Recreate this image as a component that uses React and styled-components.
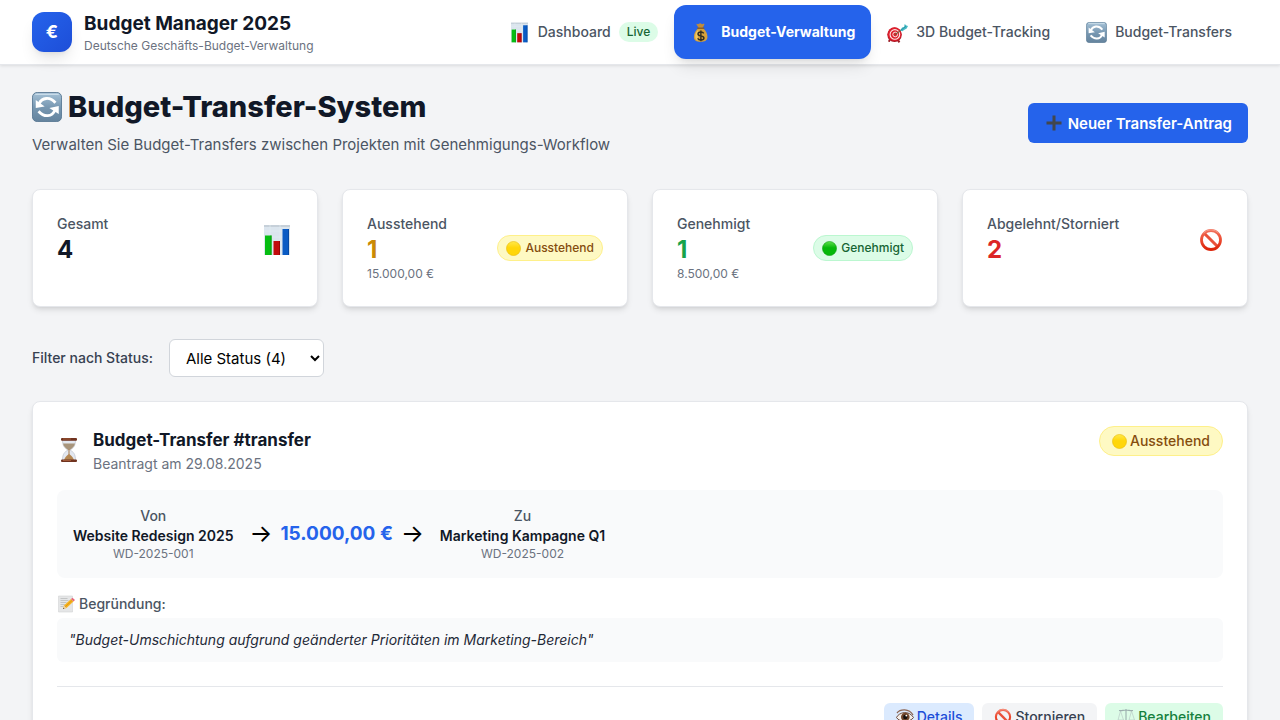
import React from "react";
import styled, { createGlobalStyle, css } from "styled-components";

const GlobalStyle = createGlobalStyle`
  *, *::before, *::after { box-sizing: border-box; }
  body {
    margin: 0;
    background: #f3f4f6;
    color: #111827;
    font-family: Inter, "Liberation Sans", sans-serif;
    font-size: 15px;
    line-height: 24px;
  }
  h1, h2, h3, p { margin: 0; }
  button, select { font-family: inherit; }
`;

/* ---------- icons ---------- */

const Icon = styled.svg`
  display: block;
  flex: none;
  width: ${(p) => p.$size}px;
  height: ${(p) => p.$size}px;
`;

const ChartIcon = ({ size }) => (
  <Icon $size={size} viewBox="0 0 32 32" aria-hidden="true">
    <path d="M3 1h26v30H3z" fill="#dbe5ee" />
    <path d="M3 1h26v2H3z" fill="#c6d0d9" />
    <path d="M3 7h26M3 13h26M3 19h26M3 25h26M9 1v30M19 1v30" stroke="#e4ecf2" strokeWidth="0.600" />
    <path d="M4 11.500h6.500V31H4z" fill="#06bd12" />
    <path d="M12.500 17H19v14h-6.500z" fill="#c20a0c" />
    <path d="M21.500 5H28v26h-6.500z" fill="#0a5bc4" />
    <path d="M9.500 11.500h1V31h-1z" fill="#079b10" />
    <path d="M18 17h1v14h-1z" fill="#990406" />
    <path d="M27 5h1v26h-1z" fill="#0649a4" />
  </Icon>
);

const MoneyBagIcon = ({ size }) => (
  <Icon $size={size} viewBox="0 0 32 32" aria-hidden="true">
    <path d="M11 3c2 1 2.500-1 4.500-1s2 2 4 1c2-1 3 0 2 2l-3 5h-4.500l-3.500-5c-1-2-.5-3 .5-2z" fill="#c08c3a" />
    <path d="M13 9.500h6.500c5 3 7 8.500 7 13.500s-4 7.500-10.500 7.500S6 28 6 23s2-10.500 7-13.500z" fill="#d6a23d" />
    <path d="M8 22c0-5 2-9 5-10-1 5-2 11 0 16-4 0-5-2.500-5-6z" fill="#efc966" />
    <path d="M12 9.500h9" stroke="#8b5f24" strokeWidth="2.200" strokeLinecap="round" />
    <path d="M21 17.200c-1-1.600-2.500-2-4.500-2-3 0-4.300 1.300-4.300 3 0 4.300 9 2 9 6.200 0 2-2 3-4.600 3-2.200 0-4-.7-5-2.300M16.600 13v16.500" fill="none" stroke="#332f22" strokeWidth="2.200" />
  </Icon>
);

const TargetIcon = ({ size }) => (
  <Icon $size={size} viewBox="0 0 32 32" aria-hidden="true">
    <path d="M4 27l-1 3M17 28l2 3" stroke="#9c2028" strokeWidth="3" />
    <circle cx="11.500" cy="19.500" r="11" fill="#a81320" />
    <circle cx="11.500" cy="18.500" r="10.500" fill="#de1f2d" />
    <circle cx="12" cy="19" r="7.300" fill="none" stroke="#fbe9e6" strokeWidth="1.700" />
    <circle cx="12.500" cy="19" r="3.600" fill="#d52730" stroke="#fbe9e6" strokeWidth="1.500" />
    <path d="M12.500 19L24 10.500" stroke="#7b5a3a" strokeWidth="1.800" />
    <path d="M20 13l3-4.500 3-1 1-4.500 2.500 2.500 2.500.500-2 4-4 2-2.500 2z" fill="#45bac5" />
    <path d="M21 12.500l8-6" stroke="#207f91" strokeWidth="1" />
  </Icon>
);

const CycleIcon = ({ size }) => (
  <Icon $size={size} viewBox="0 0 32 32" aria-hidden="true">
    <defs>
      <linearGradient id="cycleFace" x1="0" y1="0" x2="0" y2="1">
        <stop offset="0" stopColor="#a6c2d7" />
        <stop offset="0.500" stopColor="#7898b2" />
        <stop offset="1" stopColor="#64839d" />
      </linearGradient>
    </defs>
    <rect x="0.500" y="0.500" width="31" height="31" rx="5" fill="url(#cycleFace)" stroke="#5c7b95" />
    <path d="M4 2.500h24" stroke="#c9dce9" strokeWidth="1.500" strokeLinecap="round" />
    <path d="M7.500 12.500C10.500 6 19 4.500 25 11.500" fill="none" stroke="#fff" strokeWidth="3" />
    <path d="M24.500 19.500C21.500 26.500 13 27.500 7 20.500" fill="none" stroke="#fff" strokeWidth="3" />
    <path d="M4 8.500v8.500l9.500-1.500z" fill="#fff" />
    <path d="M28.500 23.500V15L18.500 17z" fill="#fff" />
  </Icon>
);

const PlusIcon = ({ size }) => (
  <Icon $size={size} viewBox="0 0 16 16" aria-hidden="true">
    <path d="M6.500 0.500h3v6h6v3h-6v6h-3v-6h-6v-3h6z" fill="#42474d" />
  </Icon>
);

const BanIcon = ({ size }) => (
  <Icon $size={size} viewBox="0 0 24 24" aria-hidden="true">
    <defs>
      <linearGradient id="banRing" x1="0" y1="0" x2="0" y2="1">
        <stop offset="0" stopColor="#f1705a" />
        <stop offset="0.500" stopColor="#ec4c32" />
        <stop offset="1" stopColor="#dc2308" />
      </linearGradient>
    </defs>
    <path d="M5.200 5.200l13.600 13.600" stroke="#e9513a" strokeWidth="3" />
    <circle cx="12" cy="12" r="9.500" fill="none" stroke="url(#banRing)" strokeWidth="2.800" />
    <path d="M4.500 5A10.500 10.500 0 0 1 19.500 5" fill="none" stroke="#f6a99b" strokeWidth="0.700" />
  </Icon>
);

const DOTS = {
  yellow: ["#ffe94a", "#ffd60a", "#e8b800"],
  green: ["#5fe04d", "#06b80a", "#079c0c"],
};

const DotIcon = ({ size, color }) => (
  <Icon $size={size} viewBox="0 0 16 16" aria-hidden="true">
    <defs>
      <linearGradient id={`dot-${color}`} x1="0" y1="0" x2="0" y2="1">
        <stop offset="0" stopColor={DOTS[color][0]} />
        <stop offset="0.450" stopColor={DOTS[color][1]} />
        <stop offset="1" stopColor={DOTS[color][1]} />
      </linearGradient>
    </defs>
    <circle cx="8" cy="8" r="7.500" fill={`url(#dot-${color})`} stroke={DOTS[color][2]} strokeWidth="0.600" />
  </Icon>
);

const HourglassIcon = ({ size }) => (
  <Icon $size={size} viewBox="0 0 24 24" aria-hidden="true">
    <path d="M5.500 2h13c0 6-2 8-5.500 10 3.500 2 5.500 4 5.500 10h-13c0-6 2-8 5.500-10-3.500-2-5.500-4-5.500-10z" fill="#e3e8f1" stroke="#b7bcc6" strokeWidth="0.600" />
    <path d="M6 5.500h12c-.5 3-2.500 4.500-5 6.300h-2C8.500 10 6.500 8.500 6 5.500z" fill="#a8957c" />
    <path d="M12 11v6" stroke="#a57a4d" strokeWidth="1" />
    <path d="M7 22c1-3 4-5.500 5-6 1 .5 4 3 5 6z" fill="#b48753" />
    <rect x="4" y="0" width="16" height="2.800" rx="1" fill="#70331f" />
    <rect x="4" y="21.500" width="16" height="2.500" rx="1" fill="#70331f" />
    <path d="M6 1h8M6 22.500h8" stroke="#b66a43" strokeWidth="0.700" />
  </Icon>
);

const MemoIcon = ({ size }) => (
  <Icon $size={size} viewBox="0 0 18 18" aria-hidden="true">
    <path d="M1.500 1h14v16h-14z" fill="#e5e6e7" stroke="#d2d4d5" strokeWidth="0.600" />
    <path d="M3.500 3.500h7M3.500 5.500h8M3.500 7.500h6M3.500 9.500h5M3.500 11.500h3" stroke="#b4b6b8" strokeWidth="0.700" />
    <path d="M6 14l1-3.500 7-6.500 2.500 2.500-7 6.500z" fill="#f6b522" />
    <path d="M8 12l7-6.500" stroke="#d88a10" strokeWidth="0.800" />
    <path d="M14 4l1.500-1.300L18 5l-1.500 1.500z" fill="#e8667a" />
    <path d="M6 14l1-3.500L9.500 13z" fill="#ead0a5" />
    <path d="M6 14l.4-1.300.9.900z" fill="#333" />
  </Icon>
);

const EyeIcon = ({ size }) => (
  <Icon $size={size} viewBox="0 0 18 18" aria-hidden="true">
    <path d="M1 5C4 1 13 0 17 7" fill="none" stroke="#8c6553" strokeWidth="1.300" />
    <path d="M.5 9.500C3 4 13 2 17.500 9.500 14 14.500 4 15 .5 9.500z" fill="#f3eeea" stroke="#6a4a3c" strokeWidth="1" />
    <circle cx="9.300" cy="9" r="4.300" fill="#71472c" />
    <circle cx="9.300" cy="9" r="2.200" fill="#15100e" />
    <circle cx="10.300" cy="7.600" r="0.900" fill="#fff" />
  </Icon>
);

const ScaleIcon = ({ size }) => (
  <Icon $size={size} viewBox="0 0 18 18" aria-hidden="true">
    <path d="M9 1v14M2 2.500c3 .5 4-.5 7-.5s4 1 7 .5M5.500 16h7" fill="none" stroke="#9caeae" strokeWidth="1.100" />
    <path d="M3.500 3L1 12h5.500zM14.500 3L12 12h5.500z" fill="none" stroke="#b3c2c1" strokeWidth="0.600" />
    <path d="M.5 12h6.500c-.5 2.500-6 2.500-6.500 0zM11 12h6.500c-.5 2.500-6 2.500-6.500 0z" fill="#a9b8b7" />
  </Icon>
);

/* ---------- header ---------- */

const Header = styled.header`
  display: flex;
  align-items: center;
  justify-content: space-between;
  height: 65px;
  padding: 0 32px;
  background: #fff;
  border-bottom: 1px solid #e5e7eb;
  box-shadow: 0 1px 3px rgba(0, 0, 0, 0.1);
`;

const Brand = styled.div`
  display: flex;
  align-items: center;
  gap: 12px;
`;

const Logo = styled.div`
  display: flex;
  align-items: center;
  justify-content: center;
  width: 40px;
  height: 40px;
  border-radius: 12px;
  background: linear-gradient(135deg, #2563eb, #1d4ed8);
  box-shadow: 0 10px 15px -3px rgba(0, 0, 0, 0.1), 0 4px 6px -4px rgba(0, 0, 0, 0.1);
  color: #fff;
  font-size: 18px;
  font-weight: 700;
`;

const BrandName = styled.p`
  font-size: 19px;
  font-weight: 700;
  line-height: 28px;
`;

const BrandNote = styled.p`
  color: #6b7280;
  font-size: 12px;
  line-height: 16px;
`;

const Nav = styled.nav`
  display: flex;
  align-items: center;
  gap: 4px;
`;

const NavLink = styled.a`
  display: flex;
  align-items: center;
  gap: 8px;
  height: 52px;
  padding: 0 16px;
  border-radius: 12px;
  color: #4b5563;
  font-size: 14px;
  font-weight: 500;
  line-height: 20px;
  text-decoration: none;
  white-space: nowrap;
  ${(p) =>
    p.$active &&
    css`
      gap: 10px;
      height: 54px;
      margin: 0 -4px;
      background: #2563eb;
      color: #fff;
      font-weight: 700;
      box-shadow: 0 10px 15px -3px rgba(0, 0, 0, 0.1), 0 4px 6px -4px rgba(0, 0, 0, 0.1);
    `}
`;

const LiveTag = styled.span`
  padding: 2px 8px;
  border-radius: 10px;
  background: #dcfce7;
  color: #166534;
  font-size: 12px;
  line-height: 16px;
`;

/* ---------- page ---------- */

const Main = styled.main`
  padding: 24px 32px;
`;

const PageHead = styled.div`
  display: flex;
  align-items: center;
  justify-content: space-between;
  margin-bottom: 32px;
`;

const PageTitle = styled.h1`
  display: flex;
  align-items: center;
  gap: 6px;
  margin-bottom: 8px;
  font-size: 29px;
  font-weight: 800;
  line-height: 36px;
`;

const PageNote = styled.p`
  color: #4b5563;
`;

const PrimaryButton = styled.button`
  display: flex;
  align-items: center;
  gap: 6px;
  height: 40px;
  padding: 0 16px 0 18px;
  border: 0;
  border-radius: 6px;
  background: #2563eb;
  color: #fff;
  font-size: 15px;
  font-weight: 600;
`;

const Card = styled.section`
  padding: 24px;
  border: 1px solid #e5e7eb;
  border-radius: 8px;
  background: #fff;
  box-shadow: 0 4px 6px -1px rgba(0, 0, 0, 0.1), 0 2px 4px -2px rgba(0, 0, 0, 0.1);
`;

const Stats = styled.div`
  display: grid;
  grid-template-columns: repeat(4, 1fr);
  gap: 24px;
  margin-bottom: 32px;
`;

const StatBody = styled.div`
  display: flex;
  align-items: center;
  justify-content: space-between;
`;

const StatLabel = styled.p`
  color: #4b5563;
  font-size: 14px;
  font-weight: 500;
  line-height: 20px;
`;

const StatValue = styled.p`
  color: ${(p) => p.$color};
  font-size: 24px;
  font-weight: 700;
  line-height: 32px;
`;

const Muted = styled.p`
  color: #6b7280;
  font-size: ${(p) => (p.$small ? 12 : 14)}px;
  line-height: ${(p) => (p.$small ? 16 : 20)}px;
`;

const badgeTones = {
  yellow: css`
    background: #fef9c3;
    border-color: #fef08a;
    color: #854d0e;
  `,
  green: css`
    background: #dcfce7;
    border-color: #bbf7d0;
    color: #166534;
  `,
};

const Badge = styled.span`
  display: flex;
  align-items: center;
  gap: ${(p) => (p.$large ? 3 : 4)}px;
  padding: ${(p) => (p.$large ? "4px 12px" : "4px 8px")};
  border: 1px solid;
  border-radius: 15px;
  font-size: ${(p) => (p.$large ? 14 : 12)}px;
  font-weight: 500;
  line-height: ${(p) => (p.$large ? 20 : 16)}px;
  ${(p) => badgeTones[p.$tone]}
`;

const FilterRow = styled.div`
  display: flex;
  align-items: center;
  gap: 16px;
  margin-bottom: 24px;
`;

const FilterLabel = styled.label`
  color: #374151;
  font-size: 14px;
  font-weight: 500;
  line-height: 20px;
`;

const FilterSelect = styled.select`
  width: 155px;
  height: 38px;
  padding: 0 0 0 12px;
  border: 1px solid #d1d5db;
  border-radius: 6px;
  background: #fff;
  color: #000;
  font-size: 15px;
`;

/* ---------- transfer card ---------- */

const TransferHead = styled.div`
  display: flex;
  align-items: flex-start;
  justify-content: space-between;
  margin-bottom: 16px;
`;

const TransferIntro = styled.div`
  display: flex;
  align-items: center;
  gap: 12px;
`;

const TransferTitle = styled.h2`
  font-size: 17px;
  font-weight: 700;
  line-height: 28px;
`;

const Route = styled.div`
  display: flex;
  align-items: center;
  gap: 16px;
  margin-bottom: 16px;
  padding: 16px;
  border-radius: 8px;
  background: #f9fafb;
`;

const Project = styled.div`
  text-align: center;
`;

const ProjectRole = styled.p`
  color: #4b5563;
  font-size: 14px;
  font-weight: 500;
  line-height: 20px;
`;

const ProjectName = styled.p`
  font-size: 14px;
  font-weight: 600;
  line-height: 20px;
`;

const Flow = styled.div`
  display: flex;
  align-items: center;
  gap: 8px;
`;

const Arrow = styled.span`
  color: #000;
  font-size: 24px;
  line-height: 32px;
`;

const Amount = styled.span`
  color: #2563eb;
  font-size: 19px;
  font-weight: 700;
  line-height: 28px;
`;

const ReasonTitle = styled.h3`
  display: flex;
  align-items: center;
  gap: 4px;
  margin-bottom: 4px;
  color: #4b5563;
  font-size: 14px;
  font-weight: 500;
  line-height: 20px;
`;

const Reason = styled.p`
  padding: 12px;
  border-radius: 6px;
  background: #f9fafb;
  color: #1f2937;
  font-size: 14px;
  font-style: italic;
  line-height: 20px;
`;

const Actions = styled.div`
  display: flex;
  justify-content: flex-end;
  gap: 8px;
  margin-top: 24px;
  padding-top: 16px;
  border-top: 1px solid #e5e7eb;
`;

const actionTones = {
  blue: css`
    background: #dbeafe;
    color: #1d4ed8;
  `,
  gray: css`
    background: #f3f4f6;
    color: #374151;
  `,
  green: css`
    background: #dcfce7;
    color: #15803d;
  `,
};

const ActionButton = styled.button`
  display: flex;
  align-items: center;
  gap: 3px;
  padding: 4px 12px;
  border: 0;
  border-radius: 6px;
  font-size: 14px;
  font-weight: 500;
  line-height: 20px;
  ${(p) => actionTones[p.$tone]}
`;

const navItems = [
  { label: "Dashboard", icon: ChartIcon, live: true },
  { label: "Budget-Verwaltung", icon: MoneyBagIcon, active: true },
  { label: "3D Budget-Tracking", icon: TargetIcon },
  { label: "Budget-Transfers", icon: CycleIcon },
];

const stats = [
  { label: "Gesamt", value: "4", color: "#111827", mark: <ChartIcon size={32} /> },
  {
    label: "Ausstehend",
    value: "1",
    color: "#ca8a04",
    note: "15.000,00 €",
    mark: (
      <Badge $tone="yellow">
        <DotIcon size={15} color="yellow" />
        Ausstehend
      </Badge>
    ),
  },
  {
    label: "Genehmigt",
    value: "1",
    color: "#16a34a",
    note: "8.500,00 €",
    mark: (
      <Badge $tone="green">
        <DotIcon size={15} color="green" />
        Genehmigt
      </Badge>
    ),
  },
  { label: "Abgelehnt/Storniert", value: "2", color: "#dc2626", mark: <BanIcon size={24} /> },
];

export default function App() {
  return (
    <>
      <GlobalStyle />
      <Header>
        <Brand>
          <Logo>€</Logo>
          <div>
            <BrandName>Budget Manager 2025</BrandName>
            <BrandNote>Deutsche Geschäfts-Budget-Verwaltung</BrandNote>
          </div>
        </Brand>
        <Nav>
          {navItems.map(({ label, icon: NavIcon, live, active }) => (
            <NavLink key={label} href="#" $active={active} aria-current={active ? "page" : undefined}>
              <NavIcon size={21} />
              {label}
              {live && <LiveTag>Live</LiveTag>}
            </NavLink>
          ))}
        </Nav>
      </Header>
      <Main>
        <PageHead>
          <div>
            <PageTitle>
              <CycleIcon size={30} />
              Budget-Transfer-System
            </PageTitle>
            <PageNote>Verwalten Sie Budget-Transfers zwischen Projekten mit Genehmigungs-Workflow</PageNote>
          </div>
          <PrimaryButton type="button">
            <PlusIcon size={16} />
            Neuer Transfer-Antrag
          </PrimaryButton>
        </PageHead>
        <Stats>
          {stats.map((s) => (
            <Card key={s.label}>
              <StatBody>
                <div>
                  <StatLabel>{s.label}</StatLabel>
                  <StatValue $color={s.color}>{s.value}</StatValue>
                  {s.note && <Muted $small>{s.note}</Muted>}
                </div>
                {s.mark}
              </StatBody>
            </Card>
          ))}
        </Stats>
        <FilterRow>
          <FilterLabel htmlFor="status">Filter nach Status:</FilterLabel>
          <FilterSelect id="status" defaultValue="all">
            <option value="all">Alle Status (4)</option>
          </FilterSelect>
        </FilterRow>
        <Card>
          <TransferHead>
            <TransferIntro>
              <HourglassIcon size={24} />
              <div>
                <TransferTitle>Budget-Transfer #transfer</TransferTitle>
                <Muted>Beantragt am 29.08.2025</Muted>
              </div>
            </TransferIntro>
            <Badge $tone="yellow" $large>
              <DotIcon size={15} color="yellow" />
              Ausstehend
            </Badge>
          </TransferHead>
          <Route>
            <Project>
              <ProjectRole>Von</ProjectRole>
              <ProjectName>Website Redesign 2025</ProjectName>
              <Muted $small>WD-2025-001</Muted>
            </Project>
            <Flow>
              <Arrow>→</Arrow>
              <Amount>15.000,00 €</Amount>
              <Arrow>→</Arrow>
            </Flow>
            <Project>
              <ProjectRole>Zu</ProjectRole>
              <ProjectName>Marketing Kampagne Q1</ProjectName>
              <Muted $small>WD-2025-002</Muted>
            </Project>
          </Route>
          <ReasonTitle>
            <MemoIcon size={18} />
            Begründung:
          </ReasonTitle>
          <Reason>"Budget-Umschichtung aufgrund geänderter Prioritäten im Marketing-Bereich"</Reason>
          <Actions>
            <ActionButton type="button" $tone="blue">
              <EyeIcon size={18} />
              Details
            </ActionButton>
            <ActionButton type="button" $tone="gray">
              <BanIcon size={18} />
              Stornieren
            </ActionButton>
            <ActionButton type="button" $tone="green">
              <ScaleIcon size={18} />
              Bearbeiten
            </ActionButton>
          </Actions>
        </Card>
      </Main>
    </>
  );
}
